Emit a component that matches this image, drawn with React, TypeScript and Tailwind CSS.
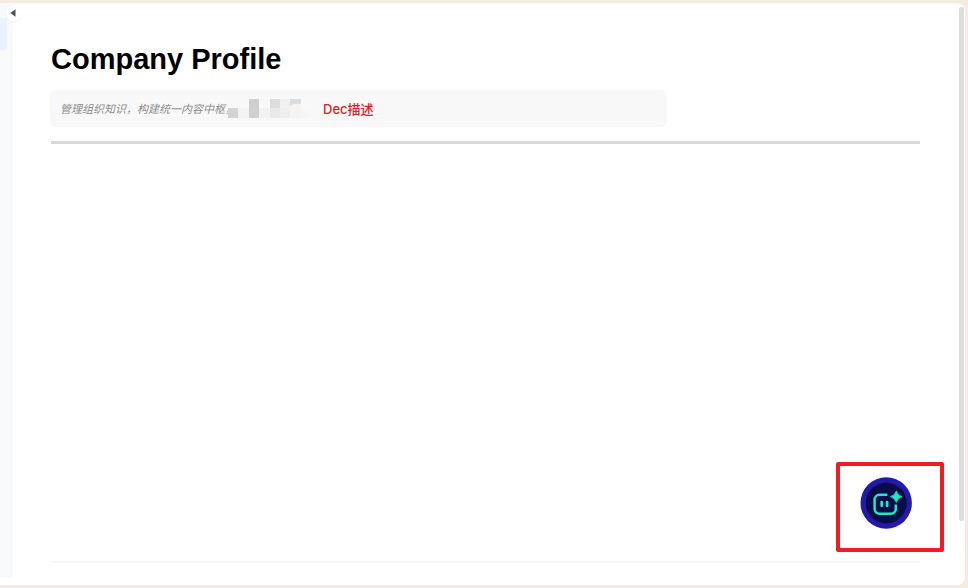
import React from 'react';

const redactedBlocks = [
  { x: 0, y: 9, w: 10, h: 10, fill: '#d3d3d4' },
  { x: 10, y: 9, w: 11, h: 10, fill: '#f3f3f3' },
  { x: 21, y: 0, w: 10, h: 19, fill: '#cfcfcf' },
  { x: 31, y: 9, w: 11, h: 10, fill: '#f3f2f2' },
  { x: 42, y: 0, w: 10, h: 9, fill: '#dbddde' },
  { x: 42, y: 9, w: 10, h: 10, fill: '#e8eaea' },
  { x: 52, y: 0, w: 10, h: 9, fill: '#f1f1f1' },
  { x: 52, y: 9, w: 10, h: 10, fill: '#eeefef' },
  { x: 62, y: 0, w: 11, h: 9, fill: '#dbdee0' },
  { x: 62, y: 8, w: 11, h: 11, fill: '#f5f4f3' },
  { x: 73, y: 9, w: 10, h: 10, fill: '#f6f6f6' },
];

const RedactedText = () => (
  <svg width="84" height="20" viewBox="0 0 84 20" className="-ml-2 shrink-0" aria-hidden="true">
    {redactedBlocks.map((block, index) => (
      <rect key={index} x={block.x} y={block.y} width={block.w} height={block.h} fill={block.fill} />
    ))}
    <path d="M62 13v-5q1-3 5-3h6v8z" fill="#f5f4f3" />
  </svg>
);

const AssistantIcon = () => (
  <svg width="52" height="52" viewBox="0 0 52 52" fill="none" aria-hidden="true">
    <circle cx="26.2" cy="26" r="25.7" fill="#2419a9" />
    <circle cx="26.2" cy="26" r="20.4" fill="#080d49" />
    <path
      d="M27.4 17.8H19.6a5 5 0 0 0-5 5V31.8a5 5 0 0 0 5 5H30.8a5 5 0 0 0 5-5V27.4"
      stroke="#20e9c2"
      strokeWidth="2.5"
    />
    <path d="M21.7 25V28.8M27.1 25V28.8" stroke="#20e9c2" strokeWidth="2.7" strokeLinecap="round" />
    <path
      d="M36.3 13.9Q37.6 18.4 42.1 19.7Q37.6 21 36.3 25.5Q35 21 30.5 19.7Q35 18.4 36.3 13.9Z"
      fill="#20e9c2"
      stroke="#20e9c2"
      strokeWidth="0.8"
      strokeLinejoin="round"
    />
  </svg>
);

const Sidebar = () => (
  <aside className="relative mb-2 w-[13px] shrink-0 bg-[#f7f9fb] pt-[13px]">
    <div className="mr-1.5 h-8 bg-[#eaf2ff]" />
    <button
      aria-label="Collapse sidebar"
      className="absolute top-0 left-1.5 z-10 flex h-4 w-4 items-center justify-center rounded-full bg-white shadow-xs"
    >
      <svg width="6" height="8" viewBox="0 0 6 8" className="-ml-0.5">
        <path d="M5.5 0.3V7.7L0.3 4Z" fill="#505050" />
      </svg>
    </button>
  </aside>
);

const App = () => {
  return (
    <div className="flex min-h-screen flex-col bg-[#f4ece2] pt-[3px] pr-[3px] pb-[3px] font-['Liberation_Sans','Noto_Sans_CJK_SC',sans-serif]">
      <div className="flex grow rounded-r-lg border-t-2 border-[#f7f9fb] bg-white">
        <Sidebar />

        <main className="flex grow flex-col pt-9 pr-[39px] pb-[22px] pl-[38px]">
          <h1 className="text-[29px] leading-9 font-bold text-black">Company Profile</h1>

          <div className="mt-[13px] -ml-px flex h-[37px] w-[71%] items-center rounded-md bg-[#f8f8f8] pl-2.5 whitespace-nowrap">
            <p className="pt-0.5 text-[11px] text-[#8c8c8c] italic">管理组织知识，构建统一内容中枢，</p>
            <RedactedText />
            <span className="ml-[11px] pt-0.5 font-['Inter','Noto_Sans_CJK_SC',sans-serif] text-[13px] font-medium text-[#db2222]">
              Dec描述
            </span>
          </div>

          <hr className="mt-3.5 border-t-3 border-[#d8d8d8]" />

          <div className="-mr-6 mt-auto mb-[9px] flex h-[90px] w-[108px] items-start justify-center self-end rounded-xs border-4 border-[#f01c24] pt-[11px] pr-2">
            <button aria-label="Open AI assistant" className="rounded-full">
              <AssistantIcon />
            </button>
          </div>

          <hr className="border-t-2 border-[#f8f8f8]" />
        </main>

        <div className="mt-0.5 mr-px w-[5px] shrink-0">
          <div className="h-[514px] rounded-full bg-[#dcdddf]" />
        </div>
      </div>
    </div>
  );
};

export default App;
